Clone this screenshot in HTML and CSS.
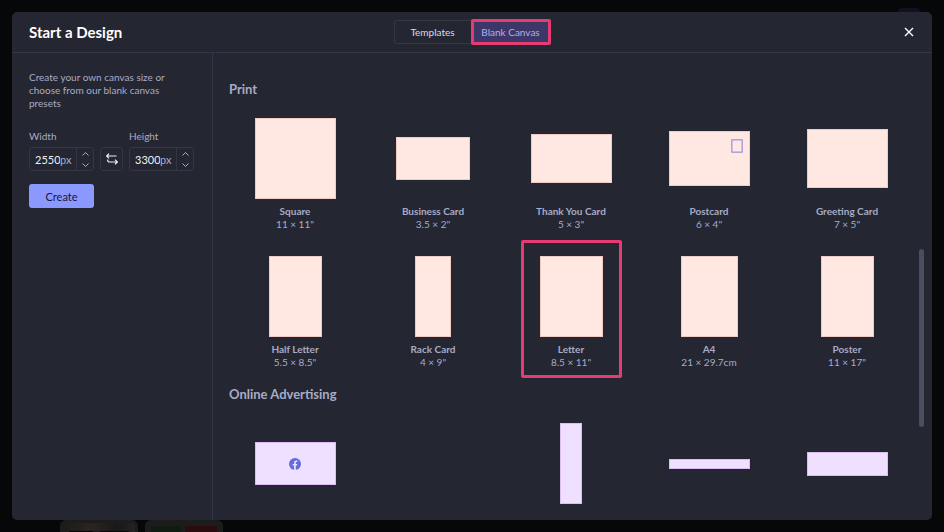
FILE: index.html
```html
<!DOCTYPE html>
<html lang="en">
<head>
<meta charset="utf-8">
<meta name="viewport" content="width=device-width, initial-scale=1">
<title>Start a Design</title>
<link rel="stylesheet" href="styles.css">
</head>
<body>
<div class="backdrop" aria-hidden="true">
  <span class="backdrop-pill"></span>
  <span class="thumb thumb-photo"></span>
  <span class="thumb thumb-cards"></span>
</div>
<div class="modal" role="dialog" aria-labelledby="title">
  <header class="header">
    <h1 class="title" id="title">Start a Design</h1>
    <nav class="tabs">
      <button class="tab" type="button">Templates</button>
      <button class="tab tab-active" type="button">Blank Canvas</button>
    </nav>
    <button class="close" type="button" aria-label="Close">
      <svg width="10" height="10" viewBox="0 0 10 10"><path d="M1 1l8 8M9 1L1 9"/></svg>
    </button>
  </header>
  <div class="body">
    <aside class="sidebar">
      <p class="intro">Create your own canvas size or choose from our blank canvas presets</p>
      <form class="size">
        <div class="field">
          <label for="width">Width</label>
          <div class="box">
            <input id="width" type="text" inputmode="numeric" value="2550"><span class="unit">px</span>
            <span class="steps">
              <button type="button" aria-label="Increase width"><svg width="7" height="4" viewBox="0 0 7 4"><path d="M.5 3.5l3-3 3 3"/></svg></button>
              <button type="button" aria-label="Decrease width"><svg width="7" height="4" viewBox="0 0 7 4"><path d="M.5.5l3 3 3-3"/></svg></button>
            </span>
          </div>
        </div>
        <button class="swap" type="button" aria-label="Swap width and height">
          <svg width="12" height="12" viewBox="0 0 12 12"><path d="M3 .6L.7 3 3 5.4M.8 3H10.500M9 6.600L11.300 9 9 11.400M11.200 9H3.500Q1.700 9 1.700 7.200V6.600"/></svg>
        </button>
        <div class="field">
          <label for="height">Height</label>
          <div class="box">
            <input id="height" type="text" inputmode="numeric" value="3300"><span class="unit">px</span>
            <span class="steps">
              <button type="button" aria-label="Increase height"><svg width="7" height="4" viewBox="0 0 7 4"><path d="M.5 3.5l3-3 3 3"/></svg></button>
              <button type="button" aria-label="Decrease height"><svg width="7" height="4" viewBox="0 0 7 4"><path d="M.5.5l3 3 3-3"/></svg></button>
            </span>
          </div>
        </div>
      </form>
      <button class="create" type="button">Create</button>
    </aside>
    <main class="main">
      <section>
        <h2 class="heading">Print</h2>
        <div class="grid">
          <button class="tile" type="button"><span class="stage"><span class="paper square"></span></span><b>Square</b><span>11 × 11"</span></button>
          <button class="tile" type="button"><span class="stage"><span class="paper business"></span></span><b>Business Card</b><span>3.5 × 2"</span></button>
          <button class="tile" type="button"><span class="stage"><span class="paper thanks"></span></span><b>Thank You Card</b><span>5 × 3"</span></button>
          <button class="tile" type="button"><span class="stage"><span class="paper postcard"><svg class="stamp" width="12" height="14" viewBox="0 0 12 14"><path d="M1 1H11V13H1Z"/><path class="teeth" d="M.5.500H11.500V13.500H.5Z"/></svg></span></span><b>Postcard</b><span>6 × 4"</span></button>
          <button class="tile" type="button"><span class="stage"><span class="paper greeting"></span></span><b>Greeting Card</b><span>7 × 5"</span></button>
          <button class="tile" type="button"><span class="stage"><span class="paper half"></span></span><b>Half Letter</b><span>5.5 × 8.5"</span></button>
          <button class="tile" type="button"><span class="stage"><span class="paper rack"></span></span><b>Rack Card</b><span>4 × 9"</span></button>
          <button class="tile tile-marked" type="button"><span class="stage"><span class="paper letter"></span></span><b>Letter</b><span>8.5 × 11"</span></button>
          <button class="tile" type="button"><span class="stage"><span class="paper a4"></span></span><b>A4</b><span>21 × 29.7cm</span></button>
          <button class="tile" type="button"><span class="stage"><span class="paper poster"></span></span><b>Poster</b><span>11 × 17"</span></button>
        </div>
      </section>
      <section>
        <h2 class="heading">Online Advertising</h2>
        <div class="grid">
          <button class="tile" type="button" aria-label="Facebook ad"><span class="stage"><span class="paper ad facebook"><svg width="12" height="12" viewBox="0 0 12 12"><circle cx="6" cy="6" r="6" fill="#606ce0"/><path d="M5.100 12V7.600H3.700V6H5.100V4.700C5.100 3.200 6 2.400 7.300 2.400L8.400 2.500V3.900H7.700C7 3.900 6.800 4.300 6.800 4.800V6H8.300L8 7.600H6.800V12Z" fill="#f0e0ff"/></svg></span></span></button>
          <span class="tile"></span>
          <button class="tile" type="button" aria-label="Skyscraper ad"><span class="stage"><span class="paper ad skyscraper"></span></span></button>
          <button class="tile" type="button" aria-label="Leaderboard ad"><span class="stage"><span class="paper ad leaderboard"></span></span></button>
          <button class="tile" type="button" aria-label="Billboard ad"><span class="stage"><span class="paper ad billboard"></span></span></button>
        </div>
      </section>
    </main>
    <span class="scrollbar"></span>
  </div>
</div>
</body>
</html>
```
FILE: styles.css
```css
* {
  box-sizing: border-box;
}

body {
  margin: 0;
  height: 100vh;
  padding: 12px;
  overflow: hidden;
  background: #050708;
  color: #a9abc6;
  font: 10px/13px Lato, "Open Sans", sans-serif;
}

button,
input {
  margin: 0;
  padding: 0;
  border: 0;
  background: none;
  color: inherit;
  font: inherit;
}

svg {
  display: block;
  fill: none;
}

/* Dimmed page behind the dialog */
.backdrop {
  position: absolute;
  inset: 0;
}

.backdrop-pill {
  position: absolute;
  top: 8px;
  right: 24px;
  width: 22px;
  height: 12px;
  border-radius: 4px;
  background: #11121f;
}

.thumb {
  position: absolute;
  bottom: -20px;
  width: 78px;
  height: 32px;
  border: 3px solid #1c1c1d;
  border-radius: 6px;
}

.thumb-photo {
  left: 60px;
  background: linear-gradient(90deg, #1d1b1a, #2b2422 40%, #191818 75%, #242222);
}

.thumb-photo::after {
  content: "";
  position: absolute;
  inset: 8px 5px 0;
  background: linear-gradient(90deg, #070708 40%, #1b1919 40% 52%, #070708 52%);
  border-radius: 3px;
}

.thumb-cards {
  left: 145px;
  border-width: 6px;
  background: linear-gradient(90deg, #101b11 46%, #1c1c1d 46% 52%, #2a0b0e 52%);
}

.modal {
  position: relative;
  display: flex;
  flex-direction: column;
  height: 100%;
  border-radius: 5px;
  overflow: hidden;
  background: #242631;
}

.header {
  display: grid;
  grid-template-columns: 1fr auto 1fr;
  align-items: center;
  height: 41px;
  padding: 0 17px;
  border-bottom: 1px solid #343643;
}

.title {
  margin: 0;
  color: #fff;
  font-size: 15px;
  line-height: 18px;
}

.tabs {
  display: flex;
  height: 26px;
}

.tab {
  width: 77px;
  margin: 1px 0;
  border: 1px solid #343643;
  border-right: 0;
  border-radius: 3px 0 0 3px;
  color: #dcdce4;
}

.tab-active {
  width: 80px;
  margin: 0;
  border: 3px solid #e63a72;
  border-radius: 2px;
  background: #3c3766;
  color: #b3adf0;
}

.close {
  justify-self: end;
  padding: 1px;
}

.close svg {
  stroke: #fff;
  stroke-width: 1.4;
}

.body {
  position: relative;
  display: flex;
  flex: 1;
  min-height: 0;
}

.sidebar {
  width: 201px;
  flex: none;
  padding: 18px 17px;
  border-right: 1px solid #343643;
}

.intro {
  width: 150px;
  margin: 0 0 20px;
}

.size {
  display: flex;
  align-items: flex-end;
  gap: 6px;
}

.field label {
  display: block;
  margin-bottom: 4px;
}

.box,
.swap {
  display: flex;
  align-items: center;
  height: 24px;
  border: 1px solid #343643;
  border-radius: 3px;
}

.box {
  width: 65px;
  padding-left: 5px;
  font-size: 11px;
}

.box input {
  width: 25px;
  color: #f0f0f2;
}

.unit {
  flex: 1;
}

.steps {
  display: flex;
  flex-direction: column;
  align-self: stretch;
  width: 17px;
  border-left: 1px solid #343643;
}

.steps button {
  display: grid;
  place-items: center;
  flex: 1;
}

.steps svg {
  stroke: #a9abc6;
}

.swap {
  justify-content: center;
  width: 23px;
}

.swap svg {
  stroke: #f0f0f2;
  stroke-width: 1.2;
}

.create {
  width: 65px;
  height: 24px;
  margin-top: 13px;
  border-radius: 3px;
  background: #8b99ff;
  color: #14173f;
  font-size: 11px;
}

.main {
  flex: 1;
  padding: 20px 19px 0 16px;
  overflow: hidden;
}

.heading {
  margin: 0;
  padding: 7px 0 4px;
  font-size: 13px;
  line-height: 18px;
}

.grid {
  display: grid;
  grid-template-columns: repeat(5, 1fr);
  column-gap: 6px;
}

.tile {
  position: relative;
  display: flex;
  flex-direction: column;
  align-items: center;
  height: 138px;
  padding-top: 16px;
}

.tile-marked::after {
  content: "";
  position: absolute;
  inset: 0 15px 0 16px;
  border: 3px solid #e63a72;
  border-radius: 2px;
}

.stage {
  display: grid;
  place-items: center;
  height: 81px;
  margin-bottom: 6px;
}

.paper {
  display: block;
  width: 81px;
  border: 1px solid #f3c9c4;
  background: #ffe8e2;
}

.square { height: 81px; }
.business { width: 74px; height: 43px; }
.thanks { height: 49px; }
.postcard { height: 55px; }
.greeting { height: 59px; }
.half { width: 53px; height: 81px; }
.rack { width: 36px; height: 81px; }
.letter { width: 63px; height: 81px; }
.a4 { width: 57px; height: 81px; }
.poster { width: 53px; height: 81px; }

.stamp {
  margin: 7px 6px 0 auto;
  stroke: #a39be0;
}

.stamp .teeth {
  stroke: #8b83dc;
  stroke-dasharray: 1 1;
}

.ad {
  border-color: #dcbcf2;
  background: #f0e0ff;
}

.facebook {
  display: grid;
  place-items: center;
  height: 43px;
}

.skyscraper { width: 22px; height: 81px; }
.leaderboard { height: 10px; }
.billboard { height: 24px; }

.scrollbar {
  position: absolute;
  right: 8px;
  bottom: 20%;
  width: 5px;
  height: 38%;
  border-radius: 3px;
  background: #4b4d60;
}
```
